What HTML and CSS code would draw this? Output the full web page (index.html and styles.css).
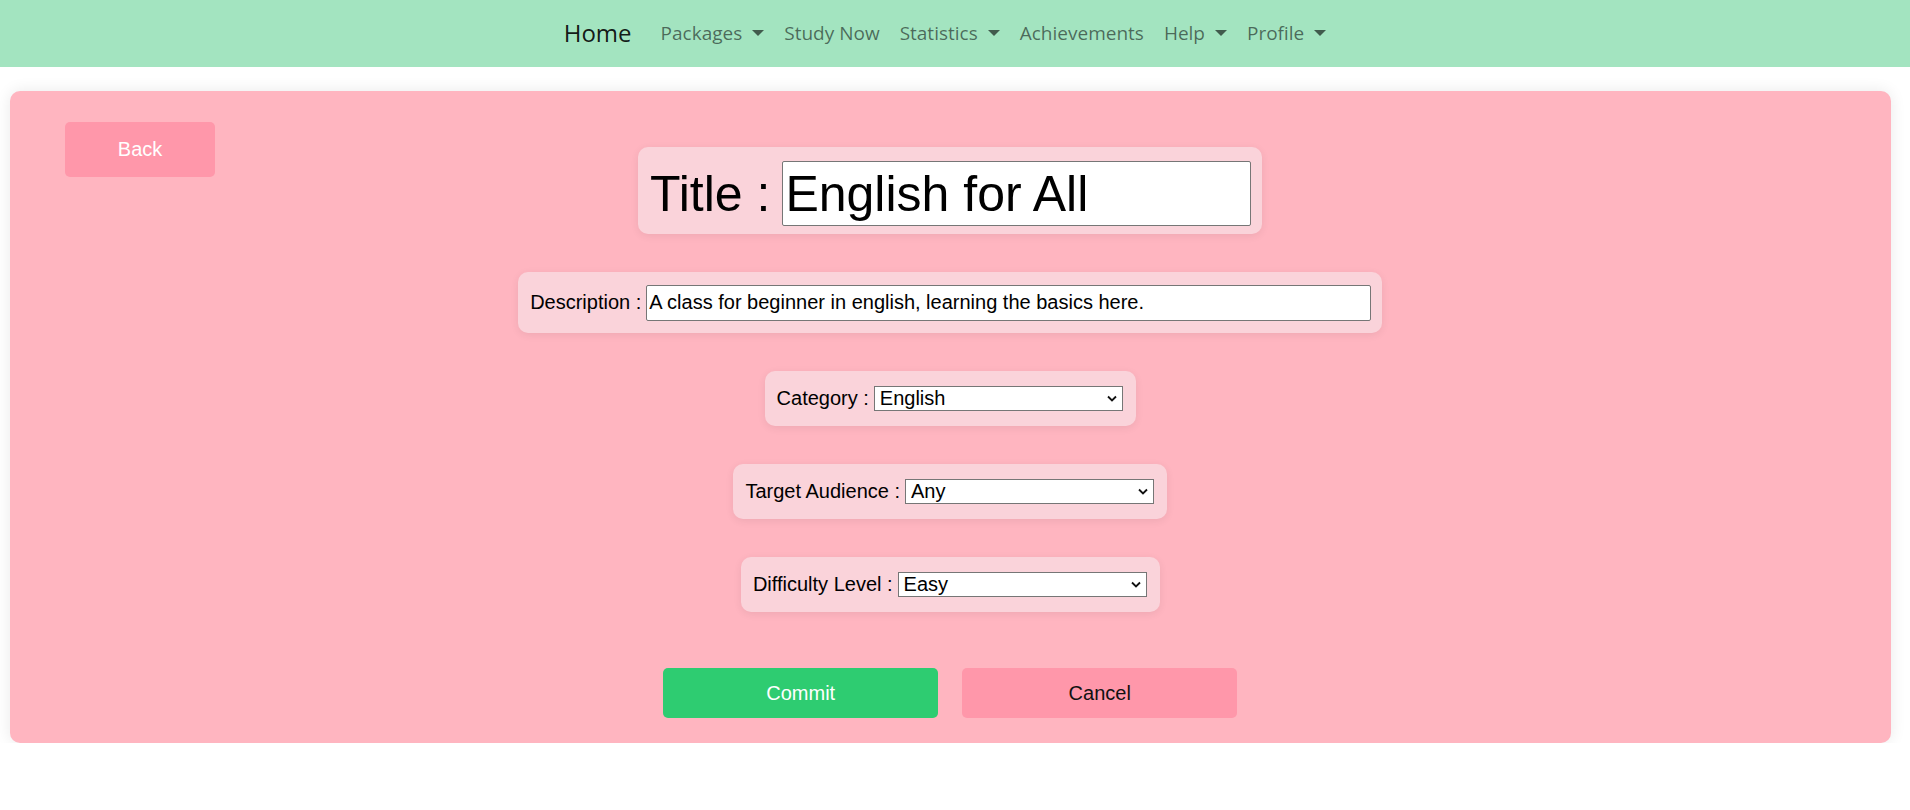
FILE: index.html
```html
<!DOCTYPE html>
<html lang="en">
<head>
<meta charset="utf-8">
<title>Edit Package</title>
<link rel="stylesheet" href="styles.css">
</head>
<body>
<nav class="navbar">
  <a class="brand" href="#">Home</a>
  <a class="nav-link toggle" href="#">Packages</a>
  <a class="nav-link" href="#">Study Now</a>
  <a class="nav-link toggle" href="#">Statistics</a>
  <a class="nav-link" href="#">Achievements</a>
  <a class="nav-link toggle" href="#">Help</a>
  <a class="nav-link toggle" href="#">Profile</a>
</nav>

<main class="card">
  <div class="header-row">
    <button class="btn btn-back">Back</button>
    <div class="field field-title">
      <label class="label-title" for="title">Title :</label>
      <input id="title" class="input-title" type="text" value="English for All">
    </div>
  </div>

  <div class="rows">
    <div class="field field-desc">
      <label class="label" for="desc">Description :</label>
      <input id="desc" class="input-desc" type="text" value="A class for beginner in english, learning the basics here.">
    </div>

    <div class="field field-select">
      <label class="label" for="cat">Category :</label>
      <span class="select-wrap">
        <select id="cat" class="select"><option>English</option></select>
        <svg class="chevron" width="10" height="7" viewBox="0 0 10 7"><path d="M1 1.5 L5 5.5 L9 1.5" fill="none" stroke="#111" stroke-width="1.8"/></svg>
      </span>
    </div>

    <div class="field field-select">
      <label class="label" for="aud">Target Audience :</label>
      <span class="select-wrap">
        <select id="aud" class="select"><option>Any</option></select>
        <svg class="chevron" width="10" height="7" viewBox="0 0 10 7"><path d="M1 1.5 L5 5.5 L9 1.5" fill="none" stroke="#111" stroke-width="1.8"/></svg>
      </span>
    </div>

    <div class="field field-select">
      <label class="label" for="diff">Difficulty Level :</label>
      <span class="select-wrap">
        <select id="diff" class="select"><option>Easy</option></select>
        <svg class="chevron" width="10" height="7" viewBox="0 0 10 7"><path d="M1 1.5 L5 5.5 L9 1.5" fill="none" stroke="#111" stroke-width="1.8"/></svg>
      </span>
    </div>

    <div class="actions">
      <button class="btn btn-commit">Commit</button>
      <button class="btn btn-cancel">Cancel</button>
    </div>
  </div>
</main>
</body>
</html>
```

FILE: styles.css
```css
* { box-sizing: border-box; }

body {
  margin: 0;
  background: #ffffff;
  font-family: "Liberation Sans", Arial, sans-serif;
}

.navbar {
  height: 67px;
  background: #a3e4c0;
  display: flex;
  justify-content: center;
  align-items: center;
  padding: 0 10px 2px 0;
  font-family: "Open Sans", "Noto Sans", sans-serif;
}

.brand {
  font-size: 24px;
  color: rgba(0, 0, 0, 0.9);
  text-decoration: none;
  margin-right: 19px;
  line-height: 1;
}

.nav-link {
  font-size: 19px;
  color: rgba(0, 0, 0, 0.55);
  text-decoration: none;
  padding: 0 10px;
  display: flex;
  align-items: center;
}

.toggle::after {
  content: "";
  display: inline-block;
  margin-left: 10px;
  border-top: 6px solid rgba(0, 0, 0, 0.6);
  border-left: 6px solid transparent;
  border-right: 6px solid transparent;
}

.card {
  margin: 24px 1% 0 0.5%;
  width: 98.5%;
  background: #ffb5c0;
  border-radius: 10px;
  box-shadow: 0 0 16px rgba(0, 0, 0, 0.09);
  padding: 31px 0 25px;
}

.header-row {
  display: grid;
  grid-template-columns: 1fr auto 1fr;
  align-items: start;
}

.btn {
  border: none;
  border-radius: 5px;
  font-family: "Liberation Sans", Arial, sans-serif;
  font-size: 20px;
  cursor: pointer;
}

.btn-back {
  justify-self: start;
  margin-left: 55.5px;
  width: 150px;
  height: 55px;
  background: #ff97aa;
  color: #ffffff;
}

.field {
  display: flex;
  align-items: center;
  background: #fad3da;
  border-radius: 10px;
  box-shadow: 0 2px 8px rgba(0, 0, 0, 0.07);
  color: #000;
}

.field-title {
  margin-top: 25px;
  padding: 14px 11px 8px 12px;
}

.label-title {
  font-size: 50px;
  margin-right: 12px;
}

.input-title {
  width: 469px;
  height: 65px;
  font-family: "Liberation Sans", Arial, sans-serif;
  font-size: 50px;
  border: 1px solid #767676;
  border-radius: 2px;
  padding: 1px 2px;
  background: #fff;
  color: #000;
}

.rows {
  margin-top: 38px;
  display: flex;
  flex-direction: column;
  align-items: center;
  gap: 38px;
}

.label {
  font-size: 20px;
  margin-right: 5px;
  white-space: nowrap;
}

.field-desc {
  padding: 12.5px 11px 12.5px 12px;
}

.input-desc {
  width: 725px;
  height: 36px;
  font-family: "Liberation Sans", Arial, sans-serif;
  font-size: 20px;
  border: 1px solid #767676;
  border-radius: 2px;
  padding: 1px 2px;
  background: #fff;
  color: #000;
}

.field-select {
  height: 55px;
  padding: 0 13px 0 12px;
}

.select-wrap {
  position: relative;
  display: flex;
}

.select {
  -webkit-appearance: none;
  appearance: none;
  width: 249px;
  height: 25px;
  font-family: "Liberation Sans", Arial, sans-serif;
  font-size: 20px;
  line-height: 23px;
  border: 1px solid #767676;
  border-radius: 0;
  padding: 0 20px 0 5px;
  background: #fff;
  color: #000;
}

.chevron {
  position: absolute;
  right: 6px;
  top: 9px;
  pointer-events: none;
}

.actions {
  margin-top: 18px;
  display: flex;
  gap: 24px;
}

.btn-commit,
.btn-cancel {
  width: 275px;
  height: 50px;
}

.btn-commit {
  background: #2ecc71;
  color: #ffffff;
}

.btn-cancel {
  background: #ff97aa;
  color: #111111;
}
```
